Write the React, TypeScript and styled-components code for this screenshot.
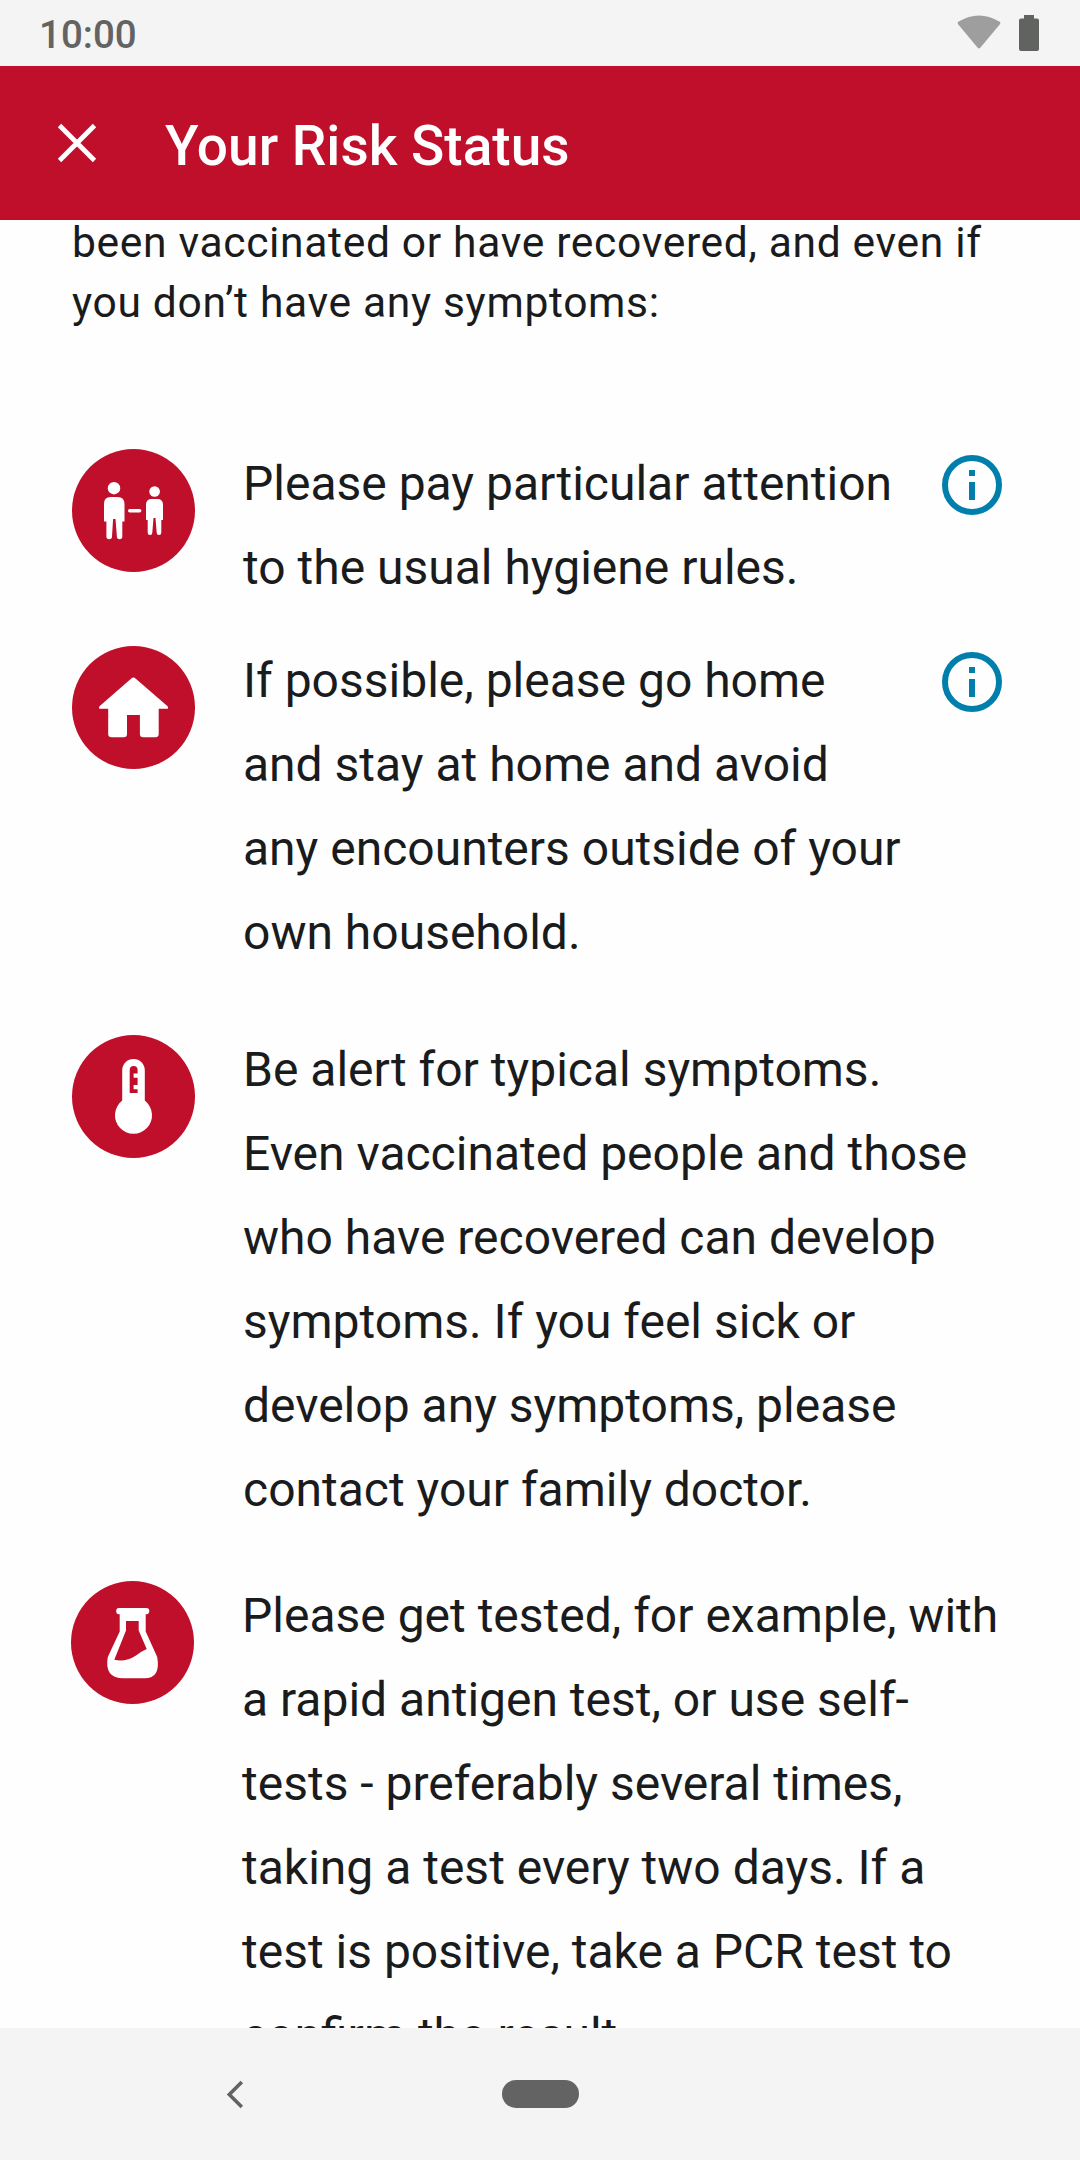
import React from "react";
import styled, { createGlobalStyle } from "styled-components";

const GlobalStyle = createGlobalStyle`
  * { box-sizing: border-box; }
  body { margin: 0; background: #fff; font-family: Roboto, "Liberation Sans", sans-serif; color: #191b1c; }
  p, h1 { margin: 0; }
`;

const Screen = styled.div`
  display: flex;
  flex-direction: column;
  width: 1080px;
  height: 2160px;
  overflow: hidden;
  background: #fefefe;
`;

const StatusBar = styled.div`
  flex: none;
  display: flex;
  align-items: flex-start;
  height: 66px;
  padding: 0 41px 0 39px;
  background: #f4f4f4;
`;

const Clock = styled.span`
  flex: 1;
  font-size: 38.5px;
  line-height: 70px;
  font-weight: 500;
  color: #636363;
`;

const WifiIcon = styled.svg`
  width: 44px;
  height: 35px;
  margin: 15px 18px 0 0;
`;

const BatteryIcon = styled.svg`
  width: 20px;
  height: 36px;
  margin-top: 15px;
`;

const AppBar = styled.header`
  flex: none;
  display: flex;
  align-items: center;
  height: 154px;
  padding-left: 57px;
  background: #c00f2b;
`;

const CloseButton = styled.button`
  display: flex;
  width: 40px;
  height: 40px;
  margin-right: 68px;
  padding: 0;
  border: 0;
  background: none;
`;

const Title = styled.h1`
  font-size: 55px;
  line-height: 64px;
  font-weight: 500;
  color: #fff;
  padding-top: 5px;
`;

const Content = styled.main`
  flex: 1;
  min-height: 0;
  overflow: hidden;
  padding: 0 72px;
`;

const Intro = styled.p`
  font-size: 42.6px;
  line-height: 60px;
  letter-spacing: 0.65px;
  margin-top: -8px;
  margin-bottom: 110px;
`;

const Advice = styled.section<{ $gap: number; $shift?: number }>`
  display: flex;
  align-items: flex-start;
  margin-bottom: ${(p) => p.$gap}px;
  margin-left: ${(p) => p.$shift ?? 0}px;
`;

const Badge = styled.svg`
  flex: none;
  width: 123px;
  height: 123px;
  margin: 7px 48px 0 0;
`;

const AdviceText = styled.p<{ $width: number }>`
  flex: none;
  width: ${(p) => p.$width}px;
  font-size: 48px;
  line-height: 84px;
`;

const InfoButton = styled.button`
  display: flex;
  flex: none;
  width: 60px;
  height: 60px;
  margin: 13px 0 0 34px;
  padding: 0;
  border: 0;
  background: none;
`;

const NavBar = styled.nav`
  flex: none;
  display: flex;
  align-items: flex-start;
  height: 132px;
  padding: 52px 0 0 226px;
  background: #f4f4f4;
`;

const BackIcon = styled.svg`
  width: 18px;
  height: 29px;
  margin-right: 258px;
`;

const HomePill = styled.div`
  width: 77px;
  height: 28px;
  border-radius: 14px;
  background: #636363;
`;

const RED = "#c00f2b";

const Distance = () => (
  <g fill="#fff">
    <circle cx="42" cy="39.2" r="6.2" />
    <path d="M38.500 48h7q7 0 7 7v17.500h-2.200v15a2.700 2.700 0 0 1-5.400 0L43.500 70h-2.400l-1.100 17.500a2.700 2.700 0 0 1-5.600 0v-15H32V55q0-7 6.500-7z" />
    <circle cx="82.600" cy="42.500" r="5.300" />
    <path d="M79.800 50h5.500q5.700 0 5.700 5.700V71h-1.700v12.700a2.300 2.300 0 0 1-4.600 0L83.500 69h-2l-1.200 14.700a2.300 2.300 0 0 1-4.600 0V71H74V55.700q0-5.700 5.800-5.700z" />
    <rect x="56" y="60" width="13.400" height="3.500" rx="1.750" />
  </g>
);

const House = () => (
  <path
    fill="#fff"
    d="M59.300 32.500a3 3 0 0 1 4.200 0L95.600 60.200q1.300 2.600-.9 2.600H86.700V88q0 3.300-3.300 3.300H71.200q-3.300 0-3.300-3.300V69H55v19q0 3.300-3.300 3.300H39.500q-3.300 0-3.300-3.300V62.800H28.400q-2.300 0-.9-2.600z"
  />
);

const Thermometer = () => (
  <g>
    <path fill="#fff" d="M50.200 35.200a11.300 11.300 0 0 1 22.600 0V65.600a18.500 18.500 0 1 1-22.600 0z" />
    <path fill={RED} d="M57.700 35a3.950 3.950 0 0 1 7.900 0v3.500h-4v4.300h4V50h-4v4.200h4V58h-7.900z" />
  </g>
);

const Flask = () => (
  <g>
    <path
      fill="#fff"
      d="M48 27h27.500q2.800 0 2.800 3.100t-2.800 3.200h-.8V50.500L86.200 76Q90 97.300 73.500 97.300H52.500Q33 97.300 36.800 76L48.700 50.500V33.300H48q-2.800 0-2.800-3.200T48 27z"
    />
    <path fill={RED} d="M55 40h12.700v9.500L75.700 68Q71 70 65 74.500 54.500 81.500 43.300 78.800L55 49.500z" />
  </g>
);

const InfoIcon = () => (
  <svg width="60" height="60" viewBox="0 0 60 60" fill="#007fad">
    <circle cx="30" cy="30" r="27" fill="none" stroke="#007fad" strokeWidth="6" />
    <path d="M27 15h6v6h-6zM27 27h6v18h-6z" />
  </svg>
);

const advices = [
  { id: "hygiene", Icon: Distance, info: true, width: 665, gap: 29, text: "Please pay particular attention to the usual hygiene rules." },
  { id: "home", Icon: House, info: true, width: 665, gap: 53, text: "If possible, please go home and stay at home and avoid any encounters outside of your own household." },
  { id: "symptoms", Icon: Thermometer, info: false, width: 738, gap: 42, text: "Be alert for typical symptoms. Even vaccinated people and those who have recovered can develop symptoms. If you feel sick or develop any symptoms, please contact your family doctor." },
  { id: "test", Icon: Flask, info: false, width: 765, gap: 0, shift: -1, text: "Please get tested, for example, with a rapid antigen test, or use self-tests - preferably several times, taking a test every two days. If a test is positive, take a PCR test to confirm the result." },
];

export default function App() {
  return (
    <Screen>
      <GlobalStyle />
      <StatusBar>
        <Clock>10:00</Clock>
        <WifiIcon viewBox="0 0 44 35">
          <path fill="#9e9e9e" d="M1.300 9.500Q-.2 7.800 1.700 6.500 22-5.500 42.300 6.500q1.900 1.300.4 3L23.300 32.800q-1.300 1.500-2.600 0z" />
        </WifiIcon>
        <BatteryIcon viewBox="0 0 20 36">
          <path fill="#616360" d="M5 0h10v3.500h3q2 0 2 2V34q0 2-2 2H2q-2 0-2-2V5.500q0-2 2-2h3z" />
        </BatteryIcon>
      </StatusBar>
      <AppBar>
        <CloseButton aria-label="Close">
          <svg width="40" height="40" viewBox="0 0 40 40" stroke="#fff" strokeWidth="4.800" fill="none">
            <path d="M2.500 2.500l35 35M37.500 2.500l-35 35" />
          </svg>
        </CloseButton>
        <Title>Your Risk Status</Title>
      </AppBar>
      <Content>
        <Intro>been vaccinated or have recovered, and even if you don’t have any symptoms:</Intro>
        {advices.map(({ id, Icon, info, width, gap, shift, text }) => (
          <Advice key={id} $gap={gap} $shift={shift}>
            <Badge viewBox="0 0 123 123">
              <circle cx="61.500" cy="61.500" r="61.500" fill={RED} />
              <Icon />
            </Badge>
            <AdviceText $width={width}>{text}</AdviceText>
            {info && (
              <InfoButton aria-label="More information">
                <InfoIcon />
              </InfoButton>
            )}
          </Advice>
        ))}
      </Content>
      <NavBar>
        <BackIcon viewBox="0 0 18 29" fill="none" stroke="#636363" strokeWidth="3.600">
          <path d="M15.800 2L3.300 14.500 15.800 27" />
        </BackIcon>
        <HomePill />
      </NavBar>
    </Screen>
  );
}
